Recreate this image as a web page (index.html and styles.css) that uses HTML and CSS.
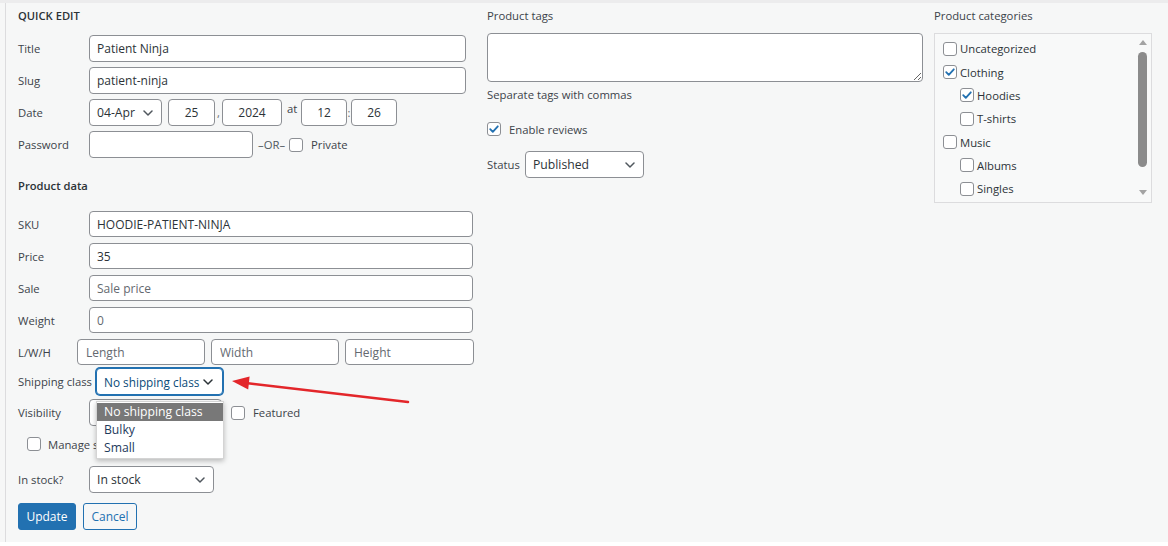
FILE: index.html
```html
<!DOCTYPE html>
<html>
<head>
<meta charset="utf-8">
<link rel="stylesheet" href="styles.css">
</head>
<body>
<div class="page">
  <div class="panel">
    <div class="col col-left">
      <div class="legend">QUICK EDIT</div>
      <div class="row first">
        <span class="lbl">Title</span>
        <input class="inp w377" value="Patient Ninja">
      </div>
      <div class="row">
        <span class="lbl">Slug</span>
        <input class="inp w377" value="patient-ninja">
      </div>
      <div class="row">
        <span class="lbl">Date</span>
        <div class="sel w73"><span>04-Apr</span><svg class="chev" width="10" height="6" viewBox="0 0 10 6"><path d="M1 1l4 4 4-4"/></svg></div>
        <input class="inp num w47 ml6" value="25">
        <span class="sep w7">,</span>
        <input class="inp num w60" value="2024">
        <span class="at">at</span>
        <input class="inp num w46" value="12">
        <span class="sep w4">:</span>
        <input class="inp num w46" value="26">
      </div>
      <div class="row">
        <span class="lbl">Password</span>
        <input class="inp w164" value="">
        <span class="or">–OR–</span>
        <span class="cb"></span>
        <span class="cbtext ml8">Private</span>
      </div>
      <div class="section">Product data</div>
      <div class="row pd first">
        <span class="lbl">SKU</span>
        <input class="inp w384" value="HOODIE-PATIENT-NINJA">
      </div>
      <div class="row pd">
        <span class="lbl">Price</span>
        <input class="inp w384" value="35">
      </div>
      <div class="row pd">
        <span class="lbl">Sale</span>
        <input class="inp w384" placeholder="Sale price">
      </div>
      <div class="row pd">
        <span class="lbl">Weight</span>
        <input class="inp w384" placeholder="0">
      </div>
      <div class="row pd">
        <span class="lbl w59">L/W/H</span>
        <input class="inp dim w128" placeholder="Length">
        <input class="inp dim w128 ml6" placeholder="Width">
        <input class="inp dim w129 ml6" placeholder="Height">
      </div>
      <div class="row ship">
        <span class="lbl w77">Shipping class</span>
        <div class="sel focus w127"><span>No shipping class</span><svg class="chev" width="10" height="6" viewBox="0 0 10 6"><path d="M1 1l4 4 4-4"/></svg></div>
      </div>
      <div class="row vis">
        <span class="lbl">Visibility</span>
        <div class="sel w133"></div>
        <span class="cb ml9"></span>
        <span class="cbtext ml8">Featured</span>
      </div>
      <div class="row manage">
        <span class="cb"></span>
        <span class="cbtext ml7">Manage stock?</span>
      </div>
      <div class="row stock">
        <span class="lbl">In stock?</span>
        <div class="sel w125"><span>In stock</span><svg class="chev" width="10" height="6" viewBox="0 0 10 6"><path d="M1 1l4 4 4-4"/></svg></div>
      </div>
      <div class="row buttons">
        <button class="btn primary">Update</button>
        <button class="btn secondary">Cancel</button>
      </div>
    </div>

    <div class="col col-mid">
      <div class="colhead">Product tags</div>
      <textarea class="tags"></textarea>
      <div class="hint">Separate tags with commas</div>
      <div class="row reviews">
        <span class="cb checked"><svg width="12" height="12" viewBox="0 0 12 12"><path d="M2.2 6.2l2.6 2.7 5-5.6"/></svg></span>
        <span class="cbtext ml8">Enable reviews</span>
      </div>
      <div class="row status">
        <span class="lbl w38">Status</span>
        <div class="sel w119"><span>Published</span><svg class="chev" width="10" height="6" viewBox="0 0 10 6"><path d="M1 1l4 4 4-4"/></svg></div>
      </div>
    </div>

    <div class="col col-right">
      <div class="colhead">Product categories</div>
      <div class="catbox">
        <ul class="cats">
          <li class="cat"><span class="cb"></span><span>Uncategorized</span></li>
          <li class="cat"><span class="cb checked"><svg width="12" height="12" viewBox="0 0 12 12"><path d="M2.2 6.2l2.6 2.7 5-5.6"/></svg></span><span>Clothing</span></li>
          <li class="cat child"><span class="cb checked"><svg width="12" height="12" viewBox="0 0 12 12"><path d="M2.2 6.2l2.6 2.7 5-5.6"/></svg></span><span>Hoodies</span></li>
          <li class="cat child"><span class="cb"></span><span>T-shirts</span></li>
          <li class="cat"><span class="cb"></span><span>Music</span></li>
          <li class="cat child"><span class="cb"></span><span>Albums</span></li>
          <li class="cat child"><span class="cb"></span><span>Singles</span></li>
        </ul>
        <div class="sb">
          <span class="sb-up"></span>
          <span class="sb-thumb"></span>
          <span class="sb-down"></span>
        </div>
      </div>
    </div>

    <ul class="dropdown">
      <li class="opt active">No shipping class</li>
      <li class="opt">Bulky</li>
      <li class="opt">Small</li>
    </ul>

    <svg class="arrow" width="1168" height="546" viewBox="0 0 1168 546">
      <line x1="408" y1="402" x2="246" y2="383" stroke="#e3262a" stroke-width="2.5" stroke-linecap="round"/>
      <polygon points="232,381 249.6,376.6 248.2,389.4" fill="#e3262a"/>
    </svg>
  </div>
</div>
</body>
</html>
```

FILE: styles.css
```css
* { box-sizing: border-box; }

body {
  margin: 0;
  background: #ffffff;
  font-family: "Open Sans", "Noto Sans", sans-serif;
  color: #3c434a;
}

.page {
  height: 542px;
  background: #f6f7f7;
  border-top: 3px solid #ececed;
  padding-left: 5px;
}

.panel {
  position: relative;
  height: 100%;
  border-left: 1px solid #dcdcde;
  padding: 3px 0 0 12px;
  display: grid;
  grid-template-columns: 469px 447px 218px;
  align-items: start;
}

.col { display: flex; flex-direction: column; align-items: flex-start; }

.legend, .section {
  font-size: 11.2px;
  font-weight: 600;
  line-height: 20px;
  height: 20px;
  color: #2c3338;
}

.section { margin-top: 18px; }

.colhead {
  font-size: 11.3px;
  line-height: 20px;
  height: 20px;
  color: #3c434a;
}

.row { display: flex; align-items: center; margin-top: 5px; }
.row.first { margin-top: 9px; }
.row.pd { margin-top: 6px; }
.row.pd.first { margin-top: 15px; }
.row.ship { margin-top: 3px; }
.row.vis { margin-top: 4px; }
.row.manage { margin-top: 8px; height: 20px; padding-left: 9px; }
.row.stock { margin-top: 12px; }
.row.buttons { margin-top: 10px; gap: 7px; }

.lbl {
  width: 71px;
  flex: none;
  font-size: 11.3px;
  color: #3c434a;
  white-space: nowrap;
}
.lbl.w59 { width: 59px; }
.lbl.w77 { width: 77px; }
.lbl.w38 { width: 38px; }

.inp {
  height: 27px;
  border: 1px solid #8c8f94;
  border-radius: 4px;
  background: #ffffff;
  font-family: "Open Sans", "Noto Sans", sans-serif;
  font-size: 12px;
  color: #2c3338;
  padding: 0 7px;
  margin: 0;
  outline: none;
}
.pd .inp { height: 26px; }
.inp::placeholder { color: #646970; opacity: 1; }
.inp.num { text-align: center; padding: 0 4px; }
.inp.dim { padding: 0 8px; }

.w377 { width: 377px; }
.w384 { width: 384px; }
.w164 { width: 164px; }
.w47 { width: 47px; }
.w60 { width: 60px; }
.w46 { width: 46px; }
.w73 { width: 73px; }
.w128 { width: 128px; }
.w129 { width: 129px; }
.w127 { width: 127px; }
.w133 { width: 133px; }
.w125 { width: 125px; }
.w119 { width: 119px; }

.ml6 { margin-left: 6px; }
.ml7 { margin-left: 7px; }
.ml8 { margin-left: 8px; }
.ml9 { margin-left: 9px; }

.sep {
  font-size: 11px;
  color: #646970;
  text-align: center;
  align-self: flex-end;
  padding-bottom: 6px;
}
.sep.w7 { width: 7px; }
.sep.w4 { width: 4px; align-self: center; padding-bottom: 0; }

.at {
  width: 19px;
  padding-left: 5px;
  font-size: 11.3px;
  color: #3c434a;
  align-self: flex-start;
  padding-top: 2px;
}

.or {
  margin-left: 5px;
  margin-right: 4px;
  font-size: 11.3px;
  color: #50575e;
}

.sel {
  height: 27px;
  display: flex;
  align-items: center;
  justify-content: space-between;
  border: 1px solid #8c8f94;
  border-radius: 4px;
  background: #ffffff;
  font-size: 12.2px;
  color: #2c3338;
  padding: 0 8px 0 7px;
  flex: none;
  white-space: nowrap;
  overflow: hidden;
}
.sel.focus {
  height: 27px;
  margin-left: 1px;
  border-color: #2271b1;
  box-shadow: 0 0 0 1px #2271b1;
  color: #0a4b78;
  font-size: 11.8px;
  padding: 0 9px 0 7px;
}
.chev { flex: none; }
.chev path { fill: none; stroke: #50575e; stroke-width: 1.5; stroke-linecap: round; stroke-linejoin: round; }
.focus .chev path { stroke: #2c3338; }

.cb {
  width: 14px;
  height: 14px;
  flex: none;
  border: 1px solid #8c8f94;
  border-radius: 3px;
  background: #ffffff;
  display: flex;
  align-items: center;
  justify-content: center;
}
.cb svg path { fill: none; stroke: #2271b1; stroke-width: 1.8; stroke-linecap: round; stroke-linejoin: round; }

.cbtext { font-size: 11.3px; color: #3c434a; white-space: nowrap; }

.btn {
  height: 27px;
  border-radius: 3px;
  font-family: "Open Sans", "Noto Sans", sans-serif;
  font-size: 12px;
  padding: 0;
  margin: 0;
  cursor: pointer;
}
.btn.primary {
  width: 58px;
  background: #2271b1;
  border: 1px solid #2271b1;
  color: #ffffff;
}
.btn.secondary {
  width: 54px;
  background: #f6f7f7;
  border: 1px solid #2271b1;
  color: #2271b1;
}

.tags {
  display: block;
  margin: 7px 0 0 0;
  width: 436px;
  height: 49px;
  border: 1px solid #8c8f94;
  border-radius: 4px;
  background: #ffffff;
  font-family: "Open Sans", sans-serif;
  font-size: 12px;
  outline: none;
}

.hint {
  margin-top: 4px;
  height: 18px;
  line-height: 18px;
  font-size: 11.3px;
  color: #3c434a;
}

.row.reviews { margin-top: 15px; height: 20px; }
.row.status { margin-top: 12px; }

.catbox {
  margin-top: 7px;
  width: 218px;
  height: 170px;
  border: 1px solid #dcdcde;
  background: #f8f9f9;
  display: flex;
}

.cats {
  list-style: none;
  margin: 0;
  padding: 3px 0 0 8px;
  flex: 1;
}

.cat {
  display: flex;
  align-items: center;
  gap: 3px;
  height: 23.35px;
  font-size: 11.3px;
  color: #2c3338;
}
.cat.child { padding-left: 17px; }

.sb {
  width: 17px;
  display: flex;
  flex-direction: column;
  align-items: center;
  padding-top: 6px;
}
.sb-up {
  width: 0; height: 0;
  border-left: 4px solid transparent;
  border-right: 4px solid transparent;
  border-bottom: 5px solid #a3a3a3;
}
.sb-thumb {
  margin-top: 7px;
  width: 9px;
  height: 115px;
  border-radius: 5px;
  background: #8b8b8b;
}
.sb-down {
  margin-top: 23px;
  width: 0; height: 0;
  border-left: 4px solid transparent;
  border-right: 4px solid transparent;
  border-top: 5px solid #a3a3a3;
}

.dropdown {
  position: absolute;
  left: 90px;
  top: 398px;
  width: 128px;
  margin: 0;
  padding: 1px 0;
  list-style: none;
  background: #ffffff;
  border: 1px solid #d4d4d4;
  box-shadow: 0 2px 5px rgba(0, 0, 0, 0.25);
  z-index: 5;
}
.opt {
  height: 18px;
  line-height: 18px;
  padding-left: 7px;
  font-size: 12.2px;
  color: #1d3a5c;
  white-space: nowrap;
}
.opt.active { background: #787878; color: #ffffff; }

.arrow {
  position: absolute;
  left: -6px;
  top: -3px;
  pointer-events: none;
  z-index: 6;
}
```
